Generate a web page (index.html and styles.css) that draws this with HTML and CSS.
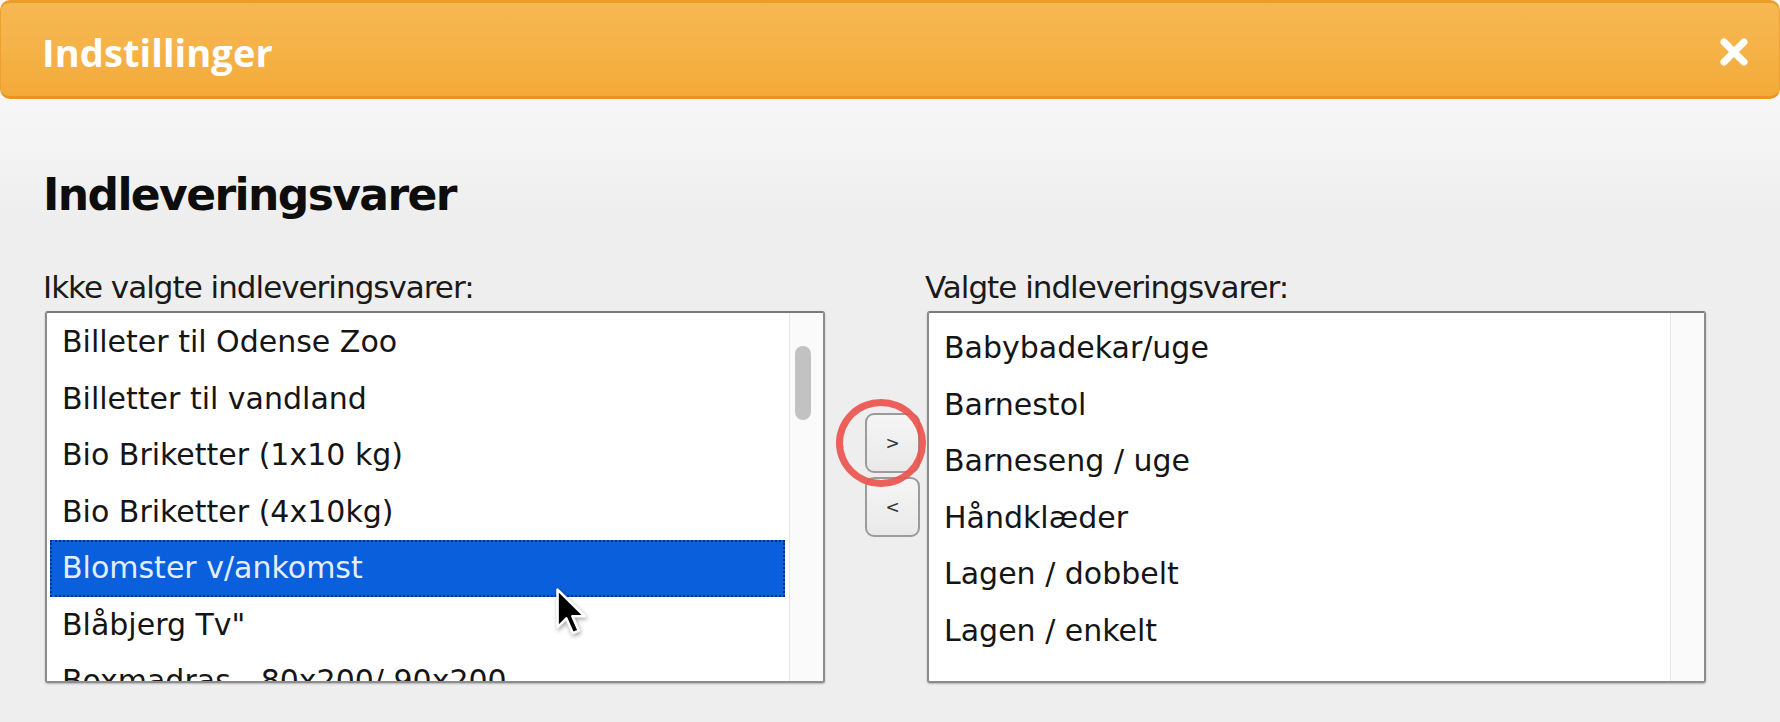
FILE: index.html
```html
<!DOCTYPE html>
<html lang="da">
<head>
<meta charset="utf-8">
<title>Indstillinger</title>
<link rel="stylesheet" href="styles.css">
</head>
<body>
<div class="dialog">
  <div class="titlebar">
    <div class="title">Indstillinger</div>
    <svg class="close" viewBox="0 0 30 30" width="30" height="30" aria-label="Luk">
      <path d="M5 5 L25 25 M25 5 L5 25" stroke="#fff" stroke-width="7" stroke-linecap="round" fill="none"/>
    </svg>
  </div>
  <div class="content">
    <h2 class="heading">Indleveringsvarer</h2>
    <div class="pickers">
      <div class="col col-left">
        <div class="label">Ikke valgte indleveringsvarer:</div>
        <div class="listbox">
          <div class="items">
            <div class="item">Billeter til Odense Zoo</div>
            <div class="item">Billetter til vandland</div>
            <div class="item">Bio Briketter (1x10 kg)</div>
            <div class="item">Bio Briketter (4x10kg)</div>
            <div class="item selected">Blomster v/ankomst</div>
            <div class="item">Blåbjerg Tv"</div>
            <div class="item">Boxmadras - 80x200/ 90x200</div>
          </div>
          <div class="track"><div class="thumb"></div></div>
          <svg class="cursor" viewBox="0 0 28 44" width="33" height="52">
            <path d="M3 3 L3 35 L10.5 27.5 L16 40 L21 37.8 L15.6 25.6 L26 25.6 Z" fill="#000" stroke="#fff" stroke-width="2.2" stroke-linejoin="round"/>
          </svg>
        </div>
      </div>
      <div class="mover">
        <div class="move-btn">&gt;</div>
        <div class="move-btn">&lt;</div>
        <div class="ring"></div>
      </div>
      <div class="col col-right">
        <div class="label">Valgte indleveringsvarer:</div>
        <div class="listbox">
          <div class="items items-right">
            <div class="item">Babybadekar/uge</div>
            <div class="item">Barnestol</div>
            <div class="item">Barneseng / uge</div>
            <div class="item">Håndklæder</div>
            <div class="item">Lagen / dobbelt</div>
            <div class="item">Lagen / enkelt</div>
          </div>
          <div class="track"></div>
        </div>
      </div>
    </div>
  </div>
</div>
</body>
</html>
```
FILE: styles.css
```css
html, body {
  margin: 0;
  padding: 0;
  background: #eeeeee;
}
body {
  width: 1780px;
  height: 722px;
  overflow: hidden;
  font-family: "DejaVu Sans", Verdana, sans-serif;
  color: #111;
}
.dialog {
  width: 1780px;
  height: 722px;
  background: linear-gradient(#f8f8f8 0px, #f6f6f6 110px, #eeeeee 220px, #eeeeee 722px);
}
.titlebar {
  box-sizing: border-box;
  height: 99px;
  display: flex;
  justify-content: space-between;
  align-items: flex-start;
  padding: 23px 30px 0 41px;
  border-top: 3px solid #eb9d2a;
  border-bottom: 3px solid #e8961f;
  border-left: 1px solid #eda032;
  border-right: 1px solid #eda032;
  border-radius: 10px;
  background: linear-gradient(#f6b851 0%, #f5b34a 45%, #f3aa38 100%);
}
.title {
  font-family: "Open Sans", "DejaVu Sans", sans-serif;
  font-weight: 700;
  font-size: 38px;
  line-height: 52px;
  color: #fff;
  letter-spacing: 0.1px;
}
.close {
  display: block;
  margin-top: 11px;
}
.content {
  padding: 70px 0 0 45px;
}
.heading {
  margin: 0;
  font-size: 44px;
  line-height: 51px;
  font-weight: 700;
  letter-spacing: -1.6px;
  color: #0d0d0d;
  margin-left: -2px;
}
.pickers {
  display: flex;
  margin-top: 49px;
}
.col {
  display: flex;
  flex-direction: column;
}
.col-left { width: 780px; }
.col-right { width: 779px; }
.label {
  font-size: 31px;
  line-height: 36px;
  letter-spacing: -1px;
  color: #1a1a1a;
  margin-bottom: 6px;
  margin-left: -2px;
}
.listbox {
  position: relative;
  box-sizing: border-box;
  height: 372px;
  display: flex;
  background: #fff;
  border: 2px solid #8c8c8c;
  border-top-color: #7a7a7a;
  border-radius: 3px;
  box-shadow: 0 1px 2px rgba(0, 0, 0, 0.25);
  overflow: hidden;
}
.items {
  flex: 1;
  padding: 1px 4px 0 3px;
  overflow: hidden;
}
.items-right {
  padding-top: 7px;
}
.item {
  height: 56.5px;
  line-height: 56.5px;
  padding-left: 12px;
  font-size: 30px;
  white-space: nowrap;
  color: #151515;
}
.item.selected {
  background: #0a5fdc;
  color: #e3edff;
  outline: 2px dotted #0f2c78;
  outline-offset: -2px;
}
.track {
  width: 33px;
  flex: none;
  background: #fafafa;
  border-left: 1px solid #e6e6e6;
  padding-top: 33px;
}
.thumb {
  width: 16px;
  height: 74px;
  margin-left: 5px;
  border-radius: 8px;
  background: #c2c2c2;
}
.cursor {
  position: absolute;
  left: 507px;
  top: 273px;
  filter: drop-shadow(1px 2px 2px rgba(0, 0, 0, 0.35));
}
.mover {
  position: relative;
  width: 55px;
  margin: 0 7px 0 40px;
  padding-top: 144px;
  display: flex;
  flex-direction: column;
  gap: 4px;
}
.move-btn {
  box-sizing: border-box;
  height: 60px;
  display: flex;
  align-items: center;
  justify-content: center;
  font-size: 17px;
  color: #333;
  border: 2px solid #9b9b9b;
  border-radius: 9px;
  background: linear-gradient(#f5f5f5, #e9e9e9);
}
.ring {
  position: absolute;
  left: -29px;
  top: 130px;
  width: 90px;
  height: 88px;
  box-sizing: border-box;
  border: 7px solid rgba(236, 84, 78, 0.92);
  border-radius: 50%;
}
```
